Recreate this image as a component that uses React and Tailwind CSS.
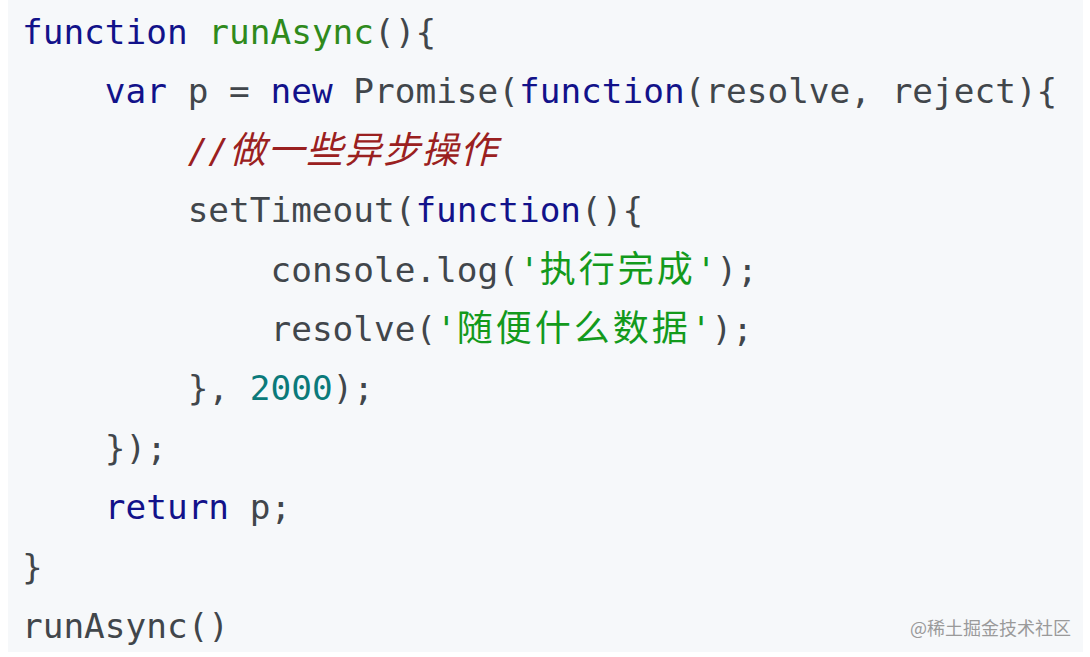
import React from "react";

const C = {
  kw: "text-[#12128a]",
  title: "text-[#2f8a1c]",
  str: "text-[#139a1c]",
  cm: "text-[#9a2020] italic",
  num: "text-[#0b7a7a]",
  txt: "text-[#41464b]",
};

// each line: [indent level, tokens]
const lines = [
  [0, [["kw", "function"], ["txt", " "], ["title", "runAsync"], ["txt", "(){"]]],
  [1, [["kw", "var"], ["txt", " p = "], ["kw", "new"], ["txt", " Promise("], ["kw", "function"], ["txt", "(resolve, reject){"]]],
  [2, [["cm", "//"], ["cmcjk", "做一些异步操作"]]],
  [2, [["txt", "setTimeout("], ["kw", "function"], ["txt", "(){"]]],
  [3, [["txt", "console.log("], ["str", "'"], ["cjk", "执行完成"], ["str", "'"], ["txt", ");"]]],
  [3, [["txt", "resolve("], ["str", "'"], ["cjk", "随便什么数据"], ["str", "'"], ["txt", ");"]]],
  [2, [["txt", "}, "], ["num", "2000"], ["txt", ");"]]],
  [1, [["txt", "});"]]],
  [1, [["kw", "return"], ["txt", " p;"]]],
  [0, [["txt", "}"]]],
  [0, [["txt", "runAsync()"]]],
];

const Token = ({ type, text }) => {
  if (type === "cjk") {
    return (
      <span className="text-[#139a1c] text-[36px] leading-none tracking-[3px] font-['Noto_Sans_CJK_SC',sans-serif]">
        {text}
      </span>
    );
  }
  if (type === "cmcjk") {
    return (
      <span className="text-[#9a2020] italic text-[37px] leading-none tracking-[1.5px] font-['Noto_Sans_CJK_SC',sans-serif]">
        {text}
      </span>
    );
  }
  return <span className={C[type]}>{text}</span>;
};

const App = () => {
  return (
    <div className="w-[1090px] h-[657px] bg-white relative overflow-hidden">
      <div className="ml-[8px] w-[1075px] h-[652px] bg-[#f6f8fa] pt-[3px] pl-[14px]">
        <pre className="m-0 font-['DejaVu_Sans_Mono','Noto_Sans_CJK_SC',monospace] text-[34.4px] leading-[59.4px] whitespace-pre">
          {lines.map(([level, tokens], i) => (
            <div key={i} className="h-[59.4px]">
              <span>{"    ".repeat(level)}</span>
              {tokens.map(([t, s], j) => (
                <Token key={j} type={t} text={s} />
              ))}
            </div>
          ))}
        </pre>
      </div>
      <div className="absolute right-[19px] bottom-[16px] text-[18px] text-[#9a9a9a] font-['Noto_Sans_CJK_SC',sans-serif]">
        @稀土掘金技术社区
      </div>
    </div>
  );
};

export default App;
